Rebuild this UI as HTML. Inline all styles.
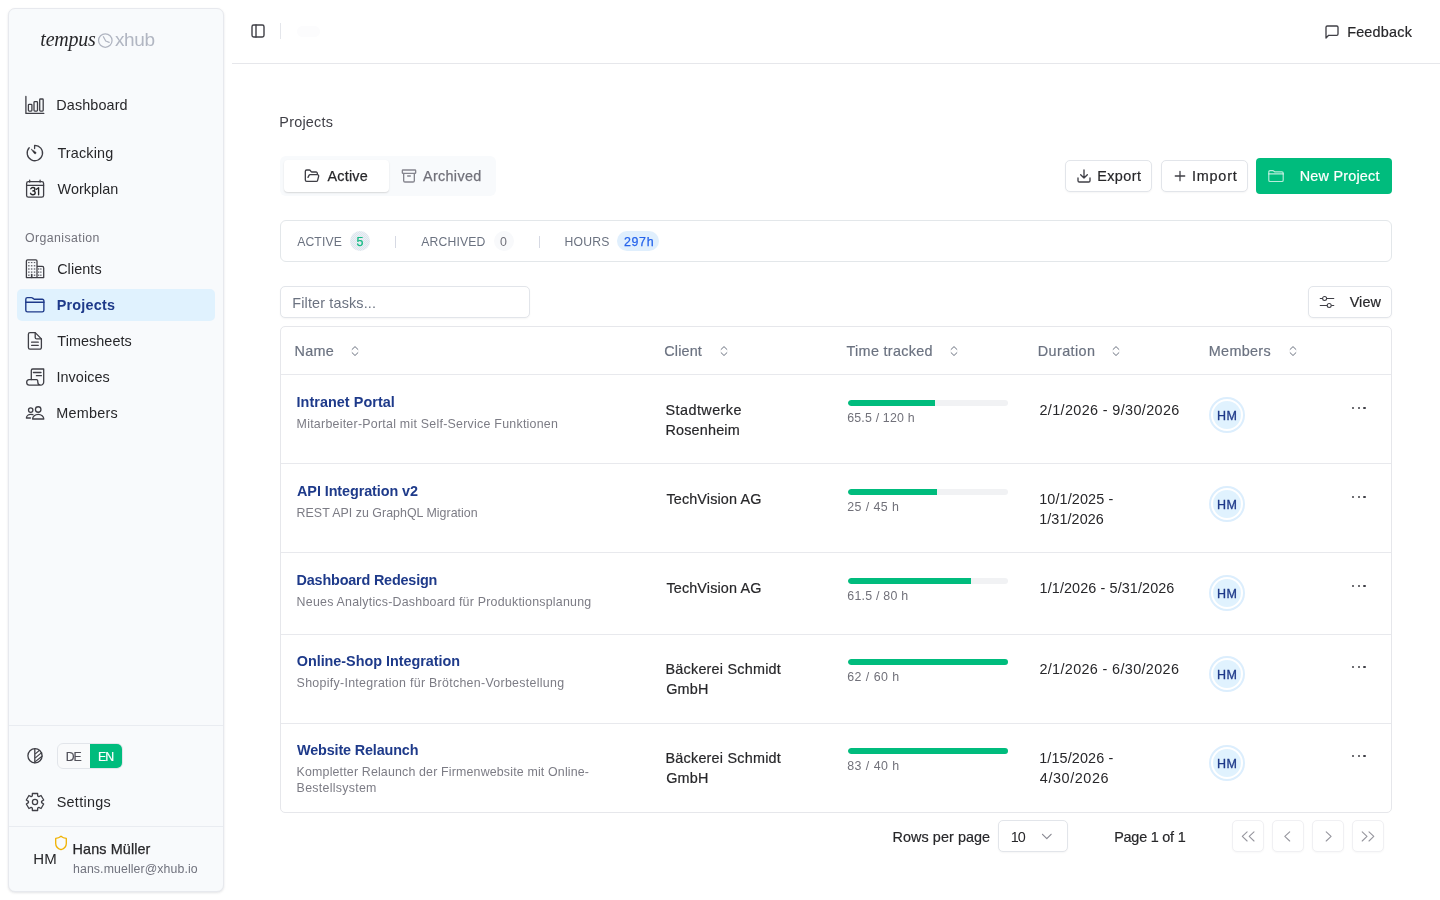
<!DOCTYPE html>
<html lang="en">
<head>
<meta charset="utf-8">
<title>Projects</title>
<style>
*{box-sizing:border-box;margin:0;padding:0}
html,body{width:1440px;height:900px;overflow:hidden;background:#fff}
body{font-family:"Liberation Sans",sans-serif;color:#27272a;position:relative;font-size:14px}
.abs{position:absolute}
.t,.nav,.hd,.pn,.pd,.cl,.du,.bl,.av{will-change:transform}
.t{position:absolute;white-space:nowrap;line-height:20px}
svg{position:absolute;overflow:visible}
.ic{fill:none;stroke-linecap:round;stroke-linejoin:round}
/* sidebar */
#sb{position:absolute;left:8px;top:8px;width:216px;height:884px;background:#f8fafc;border:1px solid #e7e9ee;border-radius:7px;box-shadow:0 1px 3px rgba(15,23,42,.08),0 1px 2px rgba(15,23,42,.04)}
.nav{position:absolute;left:57px;font-size:14.4px;letter-spacing:0px;color:#27272a;line-height:20px;white-space:nowrap}
.hl{position:absolute;left:17px;top:289px;width:198px;height:32px;background:#e0f2fe;border-radius:5px}
.div{position:absolute;left:9px;width:214px;height:1px;background:#e9ecf1}
/* main */
.bd{border:1px solid #e2e5ea;border-radius:6px;background:#fff}
.btn{position:absolute;border:1px solid #e2e5ea;border-radius:5px;background:#fff;box-shadow:0 1px 2px rgba(0,0,0,.04)}
.hd{position:absolute;top:341px;font-size:14.4px;letter-spacing:0;color:#6b7280;-webkit-text-stroke:.2px #6b7280;line-height:20px;white-space:nowrap}
.rowline{position:absolute;left:281px;width:1110px;height:1px;background:#e8e9ed}
.pn{position:absolute;left:297px;font-weight:bold;font-size:14.4px;letter-spacing:.05px;color:#1e3a8a;line-height:20px;white-space:nowrap}
.pd{position:absolute;left:297px;font-size:12.4px;letter-spacing:.12px;color:#7c7c85;line-height:16px;white-space:nowrap}
.cl{position:absolute;left:666px;font-size:14.4px;letter-spacing:0;color:#27272a;-webkit-text-stroke:.2px #27272a;line-height:20px;white-space:nowrap}
.du{position:absolute;left:1040px;font-size:14.4px;letter-spacing:0;color:#27272a;line-height:20px;white-space:nowrap}
.bar{position:absolute;left:848px;width:160px;height:6px;border-radius:3px;background:#f1f2f4;overflow:hidden}
.bar i{display:block;height:6px;background:#00bc7d;border-radius:3px 0 0 3px}
.bl{position:absolute;left:848px;font-size:12.4px;letter-spacing:.15px;color:#71717a;line-height:16px;white-space:nowrap}
.av{position:absolute;left:1209px;width:36px;height:36px;border-radius:50%;border:2px solid #dceefd;padding:2px;background:linear-gradient(#e0f2fe,#e0f2fe) content-box,#fff;color:#1e3a8a;font-size:12.5px;letter-spacing:.55px;text-indent:.6px;text-align:center;line-height:30px;-webkit-text-stroke:.3px #1e3a8a}
.dots{position:absolute;left:1352px;width:14px;height:3px}
.dots b{position:absolute;top:0;width:2.4px;height:2.4px;border-radius:50%;background:#3f3f46}
.pb{position:absolute;top:820px;width:32px;height:32px;border:1px solid #f0f0f3;border-radius:5px;background:#fff;box-shadow:0 1px 2px rgba(0,0,0,.03)}
</style>
</head>
<body>

<!-- ============ SIDEBAR ============ -->
<div id="sb"></div>

<!-- logo -->
<span class="t" id="lg1" style="top:27.3px;font-family:'Liberation Serif',serif;font-style:italic;font-size:20px;color:#27272a;line-height:24px;left:40px;text-indent:0.36px;letter-spacing:-0.223px">tempus</span>
<svg style="left:97px;top:32px" width="17" height="17" viewBox="0 0 17 17"><circle cx="8.3" cy="8.5" r="6.75" fill="none" stroke="#b0b5c1" stroke-width="1.25"/><path d="M6.4 4.7 L8.7 9 L12.2 10.3" fill="none" stroke="#b0b5c1" stroke-width="1.25" stroke-linecap="round" stroke-linejoin="round"/></svg>
<span class="t" id="lg2" style="top:28px;font-size:19px;color:#b1b6c2;line-height:24px;left:115px;letter-spacing:-.4px">xhub</span>

<div class="hl"></div>
<!-- nav icons -->
<svg style="left:0;top:0" width="224" height="900" viewBox="0 0 224 900">
 <g class="ic" stroke="#3f3f46" stroke-width="1.3">
  <!-- dashboard -->
  <path d="M25.9 96.4 V113.4 H43.8"/>
  <rect x="28.4" y="104.3" width="3.5" height="6.8" rx=".8"/>
  <rect x="34" y="101.6" width="3.5" height="9.5" rx=".8"/>
  <rect x="39.7" y="99" width="3.5" height="12.1" rx=".8"/>
  <!-- tracking -->
  <path d="M34.6 148.6 V145.3 A7.7 7.7 0 1 1 29.2 147.8"/>
  <path d="M31.4 149.4 L34.4 153.6 A1 1 0 0 0 35.9 152.3 Z" fill="#27272a" stroke-width=".6"/>
  <!-- workplan -->
  <rect x="26.6" y="181.6" width="17" height="15.6" rx="1.8"/>
  <path d="M26.6 185.3 H43.6 M29.7 180.2 V182 M40.1 180.2 V182"/>
  <path d="M36.4 189.3 L38.6 187.7 V194.8" stroke="#27272a" stroke-width="1.35"/>
  <path d="M30.8 188.8 C31.2 187.9 32 187.5 32.9 187.5 c1.2 0 2 .7 2 1.7 c0 1.1 -.9 1.7 -2.1 1.7 c1.4 0 2.4 .7 2.4 1.9 c0 1.2 -1 2 -2.4 2 c-1.1 0 -2 -.5 -2.3 -1.5" stroke="#27272a" stroke-width="1.35"/>
  <!-- clients -->
  <path d="M26.4 277.6 V261 a1.2 1.2 0 0 1 1.2 -1.2 H35.8 a1.2 1.2 0 0 1 1.2 1.2 V277.6 M37 266.4 H42.2 a1.5 1.5 0 0 1 1.5 1.5 V277.6 M26.4 277.6 H43.7"/>
  <path d="M31.7 277.4 V274.6" stroke-width="1.6"/>
  <!-- projects (active) -->
  <g stroke="#1e3a8a" stroke-width="1.4">
   <path d="M25.8 299.2 a1.6 1.6 0 0 1 1.6 -1.6 H31.4 c.6 0 .9 .2 1.3 .5 L34.2 299.2 H42.3 a1.6 1.6 0 0 1 1.6 1.6 V310.2 a1.7 1.7 0 0 1 -1.7 1.7 H27.5 a1.7 1.7 0 0 1 -1.7 -1.7 Z"/>
   <path d="M25.8 302.3 H43.9"/>
  </g>
  <!-- timesheets -->
  <path d="M35.2 332.6 H30 a1.6 1.6 0 0 0 -1.6 1.6 V347.6 a1.6 1.6 0 0 0 1.6 1.6 H39.8 a1.6 1.6 0 0 0 1.6 -1.6 V338.9 Z"/>
  <path d="M35.2 332.8 V337.4 a1.5 1.5 0 0 0 1.5 1.5 H41.3 M31.6 342.2 H38.3 M31.6 345.3 H38.3"/>
  <!-- invoices -->
  <path d="M31.3 379.8 V370.4 a1.4 1.4 0 0 1 1.4 -1.4 H43.7 V381.6 a3.2 3.2 0 0 1 -3.2 3.6 H29.2 a2.8 2.8 0 0 1 -.4 -5.5 H36.6 c1 0 1.2 1 1.2 2.2 a3.3 3.3 0 0 0 2.7 3.3"/>
  <path d="M33.4 372.5 H41 M36.4 375.7 H41.4"/>
  <!-- members -->
  <circle cx="38.2" cy="409.5" r="2.75"/>
  <path d="M32.6 419 c0 -2.6 2.5 -4.7 5.6 -4.7 s5.6 2.1 5.6 4.7 Z"/>
  <circle cx="30.7" cy="410.1" r="2.2"/>
  <path d="M32.9 414.7 c-.6 -.2 -1.3 -.3 -2.1 -.3 c-2.5 0 -4.4 1.6 -4.4 3.6 H30.4"/>
  <!-- theme -->
  <circle cx="35" cy="755.8" r="7.1"/>
  <path d="M34.8 748.8 V762.8"/>
  <path d="M35.6 753.6 L39.4 750.4 M35.6 757.6 L41.6 752.6 M35.6 761.4 L42 756.2" stroke-width="1.2"/>
  <!-- settings -->
  <path d="M32.31 795.97 L32.37 793.50 L37.63 793.50 L37.69 795.97 L38.87 796.66 L41.05 795.47 L43.68 800.03 L41.56 801.32 L41.56 802.68 L43.68 803.97 L41.05 808.53 L38.87 807.34 L37.69 808.03 L37.63 810.50 L32.37 810.50 L32.31 808.03 L31.13 807.34 L28.95 808.53 L26.32 803.97 L28.44 802.68 L28.44 801.32 L26.32 800.03 L28.95 795.47 L31.13 796.66Z" stroke-linejoin="round" stroke-width="1.3"/>
  <circle cx="35" cy="802" r="2.6"/>
  <!-- shield -->
  <path d="M61 836.2 C59.4 837.6 57.6 838.2 55.7 838.4 V843.4 C55.7 846.6 58 848.6 61 849.7 C64 848.6 66.3 846.6 66.3 843.4 V838.4 C64.4 838.2 62.6 837.6 61 836.2 Z" stroke="#f0b100" stroke-width="1.3"/>
 </g>
 <!-- client windows -->
 <g fill="#52525b">
  <rect x="28.1" y="262.1" width="1.5" height="1"/><rect x="30.9" y="262.1" width="1.5" height="1"/><rect x="33.8" y="262.1" width="1.5" height="1"/>
  <rect x="28.1" y="265.2" width="1.5" height="1.2"/><rect x="30.9" y="265.2" width="1.5" height="1.2"/><rect x="33.8" y="265.2" width="1.5" height="1.2"/>
  <rect x="28.1" y="268.4" width="1.5" height="1.2"/><rect x="30.9" y="268.4" width="1.5" height="1.2"/><rect x="33.8" y="268.4" width="1.5" height="1.2"/>
  <rect x="28.1" y="271.5" width="1.5" height="1.2"/><rect x="30.9" y="271.5" width="1.5" height="1.2"/><rect x="33.8" y="271.5" width="1.5" height="1.2"/>
  <rect x="28.1" y="274.6" width="1.5" height="1.2"/><rect x="33.8" y="274.6" width="1.5" height="1.2"/>
  <rect x="38" y="268.4" width="1.3" height="1.2"/><rect x="40.2" y="268.4" width="1.3" height="1.2"/>
  <rect x="38" y="271.5" width="1.3" height="1.2"/><rect x="40.2" y="271.5" width="1.3" height="1.2"/>
  <rect x="38" y="274.6" width="1.3" height="1.2"/><rect x="40.2" y="274.6" width="1.3" height="1.2"/>
 </g>
</svg>

<span class="nav" id="nDash" style="top:95px;left:56px;text-indent:0.34px;letter-spacing:0.107px">Dashboard</span>
<span class="nav" id="nTrk" style="top:143px;left:57px;text-indent:0.47px;letter-spacing:0.147px">Tracking</span>
<span class="nav" id="nWp" style="top:179px;left:57px;text-indent:0.56px;letter-spacing:0.018px">Workplan</span>
<span class="t" id="org" style="top:229.7px;font-size:12.3px;color:#71717a;line-height:16px;left:25px;text-indent:0.10px;letter-spacing:0.416px">Organisation</span>
<span class="nav" id="nCl" style="top:259px;left:57px;text-indent:0.15px;letter-spacing:0.076px">Clients</span>
<span class="nav" id="nPrj" style="top:295px;font-weight:bold;color:#1e3a8a;left:56px;text-indent:0.68px;letter-spacing:0.228px">Projects</span>
<span class="nav" id="nTs" style="top:331px;left:57px;text-indent:0.33px;letter-spacing:0.058px">Timesheets</span>
<span class="nav" id="nInv" style="top:367px;left:56px;text-indent:0.39px;letter-spacing:0.081px">Invoices</span>
<span class="nav" id="nMem" style="top:403px;left:56px;text-indent:0.34px;letter-spacing:0.224px">Members</span>

<div class="div" style="top:725px"></div>
<div class="abs" style="left:57px;top:743px;width:66px;height:26px;border:1px solid #e2e5ea;border-radius:6px;background:#f9fafb;overflow:hidden">
  <div class="abs" style="left:32px;top:0;width:33px;height:24px;background:#00bc7d"></div>
</div>
<span class="t" id="de" style="top:748.8px;font-size:12.3px;color:#52525b;-webkit-text-stroke:.2px #52525b;line-height:16px;left:65px;text-indent:0.64px;letter-spacing:-1.074px">DE</span>
<span class="t" id="en" style="top:748.8px;font-size:12.3px;color:#fff;-webkit-text-stroke:.2px #fff;line-height:16px;left:97px;text-indent:0.91px;letter-spacing:-0.802px">EN</span>
<span class="nav" id="nSet" style="top:792px;left:56px;text-indent:0.64px;letter-spacing:0.306px">Settings</span>
<div class="div" style="top:826px"></div>
<span class="t" id="hm" style="top:849px;font-size:15px;color:#27272a;left:33px;text-indent:0.30px;letter-spacing:0.217px">HM</span>
<span class="t" id="usr" style="top:839px;font-size:14.4px;color:#27272a;-webkit-text-stroke:.25px #27272a;left:72px;text-indent:0.57px;letter-spacing:0.106px">Hans Müller</span>
<span class="t" id="eml" style="top:861px;font-size:12.3px;color:#70727d;line-height:16px;left:73px;text-indent:0.02px;letter-spacing:0.111px">hans.mueller@xhub.io</span>


<!-- ============ HEADER ============ -->

<div class="abs" style="left:232px;top:63px;width:1208px;height:1px;background:#e6e7eb"></div>
<svg style="left:250px;top:23px" width="16" height="16" viewBox="0 0 24 24"><g class="ic" stroke="#3f3f46" stroke-width="2.1"><rect x="3" y="3" width="18" height="18" rx="2.5"/><path d="M9 3v18"/></g></svg>
<div class="abs" style="left:280px;top:23.2px;width:1px;height:16px;background:#e4e6eb"></div>
<div class="abs" style="left:297px;top:26px;width:23px;height:11px;border-radius:6px;background:#fcfcfd"></div>
<svg style="left:1323.6px;top:23.5px" width="16" height="16" viewBox="0 0 24 24"><path class="ic" stroke="#3f3f46" stroke-width="2" d="M21 15a2 2 0 0 1-2 2H7l-4 4V5a2 2 0 0 1 2-2h14a2 2 0 0 1 2 2z"/></svg>
<span class="t" id="fb" style="top:22px;font-size:14.4px;color:#27272a;-webkit-text-stroke:.2px #27272a;left:1347px;text-indent:0.13px;letter-spacing:0.223px">Feedback</span>


<!-- ============ CONTENT ============ -->

<span class="t" id="ttl" style="top:112px;font-size:14.4px;color:#3f3f46;left:279px;text-indent:0.32px;letter-spacing:0.224px">Projects</span>

<!-- tabs -->
<div class="abs" style="left:280px;top:156px;width:216px;height:40px;border-radius:6px;background:#f8fafc"></div>
<div class="abs" style="left:284px;top:160px;width:104.5px;height:32px;border-radius:4px;background:#fff;box-shadow:0 1px 2px rgba(0,0,0,.10),0 1px 1px rgba(0,0,0,.04)"></div>
<svg style="left:304px;top:167.5px" width="16" height="16" viewBox="0 0 24 24"><path class="ic" stroke="#3f3f46" stroke-width="2" d="m6 14 1.5-2.9A2 2 0 0 1 9.24 10H20a2 2 0 0 1 1.94 2.5l-1.54 6a2 2 0 0 1-1.95 1.5H4a2 2 0 0 1-2-2V5a2 2 0 0 1 2-2h3.9a2 2 0 0 1 1.69.9l.81 1.2a2 2 0 0 0 1.67.9H18a2 2 0 0 1 2 2v2"/></svg>
<span class="t" id="tb1" style="top:166px;font-size:14.4px;color:#27272a;-webkit-text-stroke:.25px #27272a;left:327px;text-indent:0.52px;letter-spacing:0.199px">Active</span>
<svg style="left:400.5px;top:167.5px" width="16" height="16" viewBox="0 0 24 24"><g class="ic" stroke="#85858e" stroke-width="2"><rect x="2" y="3" width="20" height="5" rx="1"/><path d="M4 8v11a2 2 0 0 0 2 2h12a2 2 0 0 0 2-2V8M10 12h4"/></g></svg>
<span class="t" id="tb2" style="top:166px;font-size:14.4px;color:#71717a;-webkit-text-stroke:.25px #71717a;left:422px;text-indent:0.97px;letter-spacing:0.327px">Archived</span>

<!-- action buttons -->
<div class="btn" style="left:1065px;top:160px;width:87px;height:32px"></div>
<svg style="left:1076px;top:167.5px" width="16" height="16" viewBox="0 0 24 24"><path class="ic" stroke="#3f3f46" stroke-width="2" d="M21 15v4a2 2 0 0 1-2 2H5a2 2 0 0 1-2-2v-4M7 10l5 5 5-5M12 15V3"/></svg>
<span class="t" id="b1" style="top:166px;font-size:14.4px;color:#27272a;-webkit-text-stroke:.2px #27272a;left:1097px;text-indent:0.26px;letter-spacing:0.415px">Export</span>
<div class="btn" style="left:1160.5px;top:160px;width:87.5px;height:32px"></div>
<svg style="left:1171.5px;top:167.8px" width="16" height="16" viewBox="0 0 24 24"><path class="ic" stroke="#3f3f46" stroke-width="1.9" d="M4.9 12h14.2M12 4.9v14.2"/></svg>
<span class="t" id="b2" style="top:166px;font-size:14.4px;color:#27272a;-webkit-text-stroke:.2px #27272a;left:1191px;text-indent:0.91px;letter-spacing:0.817px">Import</span>
<div class="abs" style="left:1256px;top:158px;width:136px;height:36px;border-radius:4px;background:#00bc7d"></div>
<svg style="left:1268px;top:168px" width="16" height="16" viewBox="0 0 16 16"><g class="ic" stroke="#fff" stroke-opacity=".72" stroke-width="1.15"><path d="M.8 3.9 a1.3 1.3 0 0 1 1.3 -1.3 H4.8 c.4 0 .6 .1 .9 .4 L6.6 3.8 H13.9 a1.3 1.3 0 0 1 1.3 1.3 V12.2 a1.3 1.3 0 0 1 -1.3 1.3 H2.1 a1.3 1.3 0 0 1 -1.3 -1.3 Z"/><path d="M.8 5.9 H15.2"/></g></svg>
<span class="t" id="b3" style="top:166px;font-size:14.4px;color:#fff;-webkit-text-stroke:.2px #fff;left:1299px;text-indent:0.75px;letter-spacing:0.217px">New Project</span>

<!-- stats bar -->
<div class="abs bd" style="left:280px;top:220px;width:1112px;height:42px;border-color:#e3e7ea"></div>
<span class="t" id="s1" style="top:233.5px;font-size:12.2px;color:#6b7280;line-height:16px;left:297px;text-indent:0.22px;letter-spacing:0.104px">ACTIVE</span>
<div class="abs" style="left:350px;top:231px;width:20px;height:20px;border-radius:50%;background:repeating-conic-gradient(#e2e4e8 0 25%,#e6f2fb 0 50%) 0 0/2px 2px"></div>
<span class="t" id="s1b" style="top:233.5px;font-size:12.4px;color:#10b981;line-height:16px;-webkit-text-stroke:.25px #10b981;left:356px;text-indent:0.38px;letter-spacing:3.626px">5</span>
<div class="abs" style="left:395px;top:236px;width:1px;height:12px;background:#d6d9e3"></div>
<span class="t" id="s2" style="top:233.5px;font-size:12.2px;color:#6b7280;line-height:16px;left:421px;text-indent:0.18px;letter-spacing:0.174px">ARCHIVED</span>
<div class="abs" style="left:493.5px;top:231px;width:20px;height:20px;border-radius:50%;background:#f8f9fb"></div>
<span class="t" id="s2b" style="top:233.5px;font-size:12.4px;color:#71717a;line-height:16px;left:500.1px;letter-spacing:0px">0</span>
<div class="abs" style="left:539px;top:236px;width:1px;height:12px;background:#d6d9e3"></div>
<span class="t" id="s3" style="top:233.5px;font-size:12.2px;color:#6b7280;line-height:16px;left:564px;text-indent:0.38px;letter-spacing:0.276px">HOURS</span>
<div class="abs" style="left:617px;top:231px;width:42px;height:20px;border-radius:10px;background:#e0effd"></div>
<span class="t" id="s3b" style="top:233.5px;font-size:12.4px;color:#2563eb;line-height:16px;-webkit-text-stroke:.25px #2563eb;left:623px;text-indent:0.99px;letter-spacing:0.660px">297h</span>

<!-- filter + view -->
<div class="abs bd" style="left:280px;top:286px;width:250px;height:32px;border-radius:5px;box-shadow:0 1px 2px rgba(0,0,0,.04)"></div>
<span class="t" id="flt" style="top:292.5px;font-size:14.4px;color:#6b7280;left:292px;text-indent:0.25px;letter-spacing:0.158px">Filter tasks...</span>
<div class="btn" style="left:1308px;top:286px;width:84px;height:32px"></div>
<svg style="left:1319px;top:294px" width="16" height="16" viewBox="0 0 16 16"><g class="ic" stroke="#3f3f46" stroke-width="1.05"><path d="M1.2 4.5H14.8M1.2 11.4H14.8"/><circle cx="5.6" cy="4.5" r="2" fill="#fff"/><circle cx="10.2" cy="11.4" r="2" fill="#fff"/></g></svg>
<span class="t" id="vw" style="top:292px;font-size:14.4px;color:#27272a;-webkit-text-stroke:.2px #27272a;left:1349px;text-indent:0.64px;letter-spacing:0.136px">View</span>

<!-- table -->
<div class="abs bd" style="left:280px;top:326px;width:1112px;height:487px;border-color:#e6e7eb;border-radius:5px"></div>
<span class="hd" id="h1" style=";left:294px;text-indent:0.42px;letter-spacing:0.360px">Name</span>
<svg style="left:351px;top:345px" width="8" height="12" viewBox="0 0 8 12"><path class="ic" stroke="#6b7280" stroke-width="1" d="M1.1 4.4 L4 1.6 L6.9 4.4 M1.1 7.7 L4 10.5 L6.9 7.7"/></svg>
<span class="hd" id="h2" style=";left:664px;text-indent:0.25px;letter-spacing:0.153px">Client</span>
<svg style="left:720px;top:345px" width="8" height="12" viewBox="0 0 8 12"><path class="ic" stroke="#6b7280" stroke-width="1" d="M1.1 4.4 L4 1.6 L6.9 4.4 M1.1 7.7 L4 10.5 L6.9 7.7"/></svg>
<span class="hd" id="h3" style=";left:846px;text-indent:0.57px;letter-spacing:0.301px">Time tracked</span>
<svg style="left:949.5px;top:345px" width="8" height="12" viewBox="0 0 8 12"><path class="ic" stroke="#6b7280" stroke-width="1" d="M1.1 4.4 L4 1.6 L6.9 4.4 M1.1 7.7 L4 10.5 L6.9 7.7"/></svg>
<span class="hd" id="h4" style=";left:1037px;text-indent:0.81px;letter-spacing:0.398px">Duration</span>
<svg style="left:1112px;top:345px" width="8" height="12" viewBox="0 0 8 12"><path class="ic" stroke="#6b7280" stroke-width="1" d="M1.1 4.4 L4 1.6 L6.9 4.4 M1.1 7.7 L4 10.5 L6.9 7.7"/></svg>
<span class="hd" id="h5" style=";left:1208px;text-indent:0.81px;letter-spacing:0.308px">Members</span>
<svg style="left:1288.5px;top:345px" width="8" height="12" viewBox="0 0 8 12"><path class="ic" stroke="#6b7280" stroke-width="1" d="M1.1 4.4 L4 1.6 L6.9 4.4 M1.1 7.7 L4 10.5 L6.9 7.7"/></svg>
<div class="rowline" style="top:374.4px"></div>
<span class="pn" id="n0" style="top:392px;left:296px;text-indent:0.51px;letter-spacing:0.052px">Intranet Portal</span>
<span class="pd" id="d00" style="top:416px;left:296px;text-indent:0.60px;letter-spacing:0.252px">Mitarbeiter-Portal mit Self-Service Funktionen</span>
<span class="cl" id="c00" style="top:400px;left:665px;text-indent:0.52px;letter-spacing:0.440px">Stadtwerke</span>
<span class="cl" id="c01" style="top:420px;left:665px;text-indent:0.50px;letter-spacing:0.176px">Rosenheim</span>
<div class="bar" style="top:399.5px"><i style="width:54.6%"></i></div>
<span class="bl" id="l0" style="top:410px;left:847px;text-indent:0.26px;letter-spacing:0.166px">65.5 / 120 h</span>
<span class="du" id="u00" style="top:400px;left:1039px;text-indent:0.38px;letter-spacing:0.375px">2/1/2026 - 9/30/2026</span>
<div class="av" style="top:397.4px">HM</div>
<div class="dots" style="top:406.8px"><b style="left:0"></b><b style="left:5.6px"></b><b style="left:11.2px"></b></div>
<div class="rowline" style="top:463.4px"></div>
<span class="pn" id="n1" style="top:481px;left:297px;text-indent:0.07px;letter-spacing:-0.083px">API Integration v2</span>
<span class="pd" id="d10" style="top:505px;left:296px;text-indent:0.60px;letter-spacing:0.021px">REST API zu GraphQL Migration</span>
<span class="cl" id="c10" style="top:489px;left:666px;text-indent:0.44px;letter-spacing:0.134px">TechVision AG</span>
<div class="bar" style="top:488.5px"><i style="width:55.6%"></i></div>
<span class="bl" id="l1" style="top:499px;left:847px;text-indent:0.30px;letter-spacing:0.406px">25 / 45 h</span>
<span class="du" id="u10" style="top:489px;left:1039px;text-indent:0.14px;letter-spacing:0.125px">10/1/2025 -</span>
<span class="du" id="u11" style="top:509px;left:1039px;text-indent:0.14px;letter-spacing:0.091px">1/31/2026</span>
<div class="av" style="top:486.4px">HM</div>
<div class="dots" style="top:495.8px"><b style="left:0"></b><b style="left:5.6px"></b><b style="left:11.2px"></b></div>
<div class="rowline" style="top:552.4px"></div>
<span class="pn" id="n2" style="top:570px;left:296px;text-indent:0.60px;letter-spacing:-0.187px">Dashboard Redesign</span>
<span class="pd" id="d20" style="top:594px;left:296px;text-indent:0.60px;letter-spacing:0.231px">Neues Analytics-Dashboard für Produktionsplanung</span>
<span class="cl" id="c20" style="top:578px;left:666px;text-indent:0.44px;letter-spacing:0.134px">TechVision AG</span>
<div class="bar" style="top:577.5px"><i style="width:76.9%"></i></div>
<span class="bl" id="l2" style="top:588px;left:847px;text-indent:0.26px;letter-spacing:0.238px">61.5 / 80 h</span>
<span class="du" id="u20" style="top:578px;left:1039px;text-indent:0.60px;letter-spacing:0.103px">1/1/2026 - 5/31/2026</span>
<div class="av" style="top:575.4px">HM</div>
<div class="dots" style="top:584.8px"><b style="left:0"></b><b style="left:5.6px"></b><b style="left:11.2px"></b></div>
<div class="rowline" style="top:633.6px"></div>
<span class="pn" id="n3" style="top:651px;left:296px;text-indent:0.72px;letter-spacing:-0.023px">Online-Shop Integration</span>
<span class="pd" id="d30" style="top:675px;left:296px;text-indent:0.62px;letter-spacing:0.295px">Shopify-Integration für Brötchen-Vorbestellung</span>
<span class="cl" id="c30" style="top:659px;left:665px;text-indent:0.49px;letter-spacing:0.225px">Bäckerei Schmidt</span>
<span class="cl" id="c31" style="top:679px;left:666px;text-indent:0.26px;letter-spacing:0.159px">GmbH</span>
<div class="bar" style="top:658.5px"><i style="width:100%"></i></div>
<span class="bl" id="l3" style="top:669px;left:847px;text-indent:0.26px;letter-spacing:0.461px">62 / 60 h</span>
<span class="du" id="u30" style="top:659px;left:1039px;text-indent:0.38px;letter-spacing:0.353px">2/1/2026 - 6/30/2026</span>
<div class="av" style="top:656.4px">HM</div>
<div class="dots" style="top:665.8px"><b style="left:0"></b><b style="left:5.6px"></b><b style="left:11.2px"></b></div>
<div class="rowline" style="top:722.6px"></div>
<span class="pn" id="n4" style="top:740px;left:297px;text-indent:0.06px;letter-spacing:-0.149px">Website Relaunch</span>
<span class="pd" id="d40" style="top:764px;left:296px;text-indent:0.60px;letter-spacing:0.166px">Kompletter Relaunch der Firmenwebsite mit Online-</span>
<span class="pd" id="d41" style="top:780px;left:296px;text-indent:0.60px;letter-spacing:0.284px">Bestellsystem</span>
<span class="cl" id="c40" style="top:748px;left:665px;text-indent:0.49px;letter-spacing:0.225px">Bäckerei Schmidt</span>
<span class="cl" id="c41" style="top:768px;left:666px;text-indent:0.26px;letter-spacing:0.159px">GmbH</span>
<div class="bar" style="top:747.5px"><i style="width:100%"></i></div>
<span class="bl" id="l4" style="top:758px;left:847px;text-indent:0.14px;letter-spacing:0.485px">83 / 40 h</span>
<span class="du" id="u40" style="top:748px;left:1039px;text-indent:0.14px;letter-spacing:0.125px">1/15/2026 -</span>
<span class="du" id="u41" style="top:768px;left:1039px;text-indent:0.80px;letter-spacing:0.594px">4/30/2026</span>
<div class="av" style="top:745.4px">HM</div>
<div class="dots" style="top:754.8px"><b style="left:0"></b><b style="left:5.6px"></b><b style="left:11.2px"></b></div>
<span class="t" id="rp" style="top:827px;font-size:14.4px;color:#27272a;-webkit-text-stroke:.2px #27272a;left:892px;text-indent:0.55px;letter-spacing:0.065px">Rows per page</span>
<div class="btn" style="left:998px;top:820px;width:70px;height:32px"></div>
<span class="t" id="ten" style="top:827px;font-size:14.4px;color:#27272a;left:1010px;text-indent:0.81px;letter-spacing:-0.974px">10</span>
<svg style="left:1041px;top:830px" width="12" height="12" viewBox="0 0 12 12"><path class="ic" stroke="#8a8a93" stroke-width="1.2" d="M1.5 4.3 L5.8 8.7 L10.1 4.3"/></svg>
<span class="t" id="pg" style="top:827px;font-size:14.4px;color:#27272a;-webkit-text-stroke:.2px #27272a;left:1114px;text-indent:0.17px;letter-spacing:-0.209px">Page 1 of 1</span>
<div class="pb" style="left:1232px"></div>
<div class="pb" style="left:1272px"></div>
<div class="pb" style="left:1312px"></div>
<div class="pb" style="left:1352px"></div>


<svg style="left:1232px;top:820px" width="32" height="32" viewBox="0 0 32 32"><path class="ic" stroke="#96969e" stroke-width="1.1" d="M15.1 11.8 L10.3 16.4 L15.1 21 M22 11.8 L17.2 16.4 L22 21"/></svg>
<svg style="left:1272px;top:820px" width="32" height="32" viewBox="0 0 32 32"><path class="ic" stroke="#96969e" stroke-width="1.1" d="M17.7 11.8 L12.8 16.4 L17.7 21"/></svg>
<svg style="left:1312px;top:820px" width="32" height="32" viewBox="0 0 32 32"><path class="ic" stroke="#96969e" stroke-width="1.1" d="M14.2 11.8 L19.1 16.4 L14.2 21"/></svg>
<svg style="left:1352px;top:820px" width="32" height="32" viewBox="0 0 32 32"><path class="ic" stroke="#96969e" stroke-width="1.1" d="M10.2 11.8 L15 16.4 L10.2 21 M17 11.8 L21.8 16.4 L17 21"/></svg>
</body>
</html>
